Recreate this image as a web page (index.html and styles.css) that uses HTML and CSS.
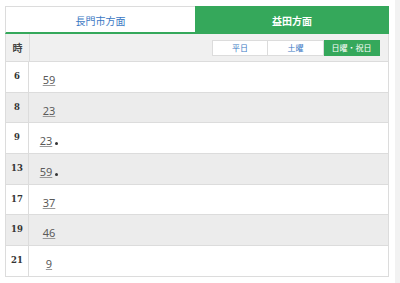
FILE: index.html
```html
<!DOCTYPE html>
<html lang="ja">
<head>
<meta charset="utf-8">
<link rel="stylesheet" href="styles.css">
</head>
<body>
<div class="page">
  <div class="timetable">
    <div class="tabs">
      <div class="tab">長門市方面</div>
      <div class="tab active">益田方面</div>
    </div>
    <div class="head">
      <div class="hour-h">時</div>
      <div class="days">
        <span class="day">平日</span>
        <span class="day">土曜</span>
        <span class="day on">日曜・祝日</span>
      </div>
    </div>
    <div class="row"><div class="hour">6</div><div class="mins"><span class="min"><u>59</u></span></div></div>
    <div class="row alt"><div class="hour">8</div><div class="mins"><span class="min"><u>23</u></span></div></div>
    <div class="row"><div class="hour">9</div><div class="mins"><span class="min"><u>23</u><i class="dot"></i></span></div></div>
    <div class="row alt"><div class="hour">13</div><div class="mins"><span class="min"><u>59</u><i class="dot"></i></span></div></div>
    <div class="row"><div class="hour">17</div><div class="mins"><span class="min"><u>37</u></span></div></div>
    <div class="row alt"><div class="hour">19</div><div class="mins"><span class="min"><u>46</u></span></div></div>
    <div class="row"><div class="hour">21</div><div class="mins"><span class="min"><u>9</u></span></div></div>
  </div>
</div>
<div class="scroll"></div>
</body>
</html>
```
FILE: styles.css
```css
html, body {
  margin: 0;
  padding: 0;
  height: 100%;
  background: #fff;
}
body {
  display: flex;
  font-family: "Noto Sans CJK JP", "Noto Sans", sans-serif;
  overflow: hidden;
}
.page {
  flex: 1;
  padding: 6px 0 0 5px;
}
.scroll {
  width: 5px;
  background: #f2f2f2;
}
.timetable {
  width: 384px;
}
.tabs {
  display: flex;
  height: 28px;
}
.tab {
  flex: 0 0 190px;
  box-sizing: border-box;
  border: 1px solid #dcdcdc;
  border-bottom: 2px solid #35a85b;
  border-right: none;
  color: #3b78c4;
  font-size: 10px;
  display: flex;
  align-items: center;
  justify-content: center;
  padding-top: 1px;
}
.tab.active {
  flex: 1;
  background: #35a85b;
  border: none;
  color: #fff;
  font-weight: bold;
}
.head {
  display: flex;
  align-items: center;
  height: 28px;
  background: #f0f0f0;
  border-left: 1px solid #dcdcdc;
  border-right: 1px solid #dcdcdc;
  border-bottom: 1px solid #dcdcdc;
  box-sizing: border-box;
}
.hour-h {
  width: 23px;
  align-self: stretch;
  display: flex;
  align-items: center;
  justify-content: center;
  border-right: 1px solid #dcdcdc;
  font-size: 10px;
  font-weight: bold;
  color: #444;
}
.days {
  margin-left: auto;
  margin-right: 8px;
  display: flex;
}
.day {
  width: 56px;
  height: 16px;
  box-sizing: border-box;
  border: 1px solid #dcdcdc;
  border-left: none;
  background: #fff;
  color: #3b78c4;
  font-size: 8px;
  display: flex;
  align-items: center;
  justify-content: center;
}
.day:first-child {
  border-left: 1px solid #dcdcdc;
}
.day.on {
  background: #35a85b;
  color: #fff;
  border-color: #35a85b;
}
.row {
  display: flex;
  align-items: flex-start;
  height: 30.7px;
  box-sizing: border-box;
  border-left: 1px solid #dcdcdc;
  border-right: 1px solid #dcdcdc;
  border-bottom: 1px solid #dcdcdc;
  background: #fff;
}
.row.alt {
  background: #ececec;
}
.hour {
  width: 23px;
  align-self: stretch;
  border-right: 1px solid #dcdcdc;
  box-sizing: border-box;
  padding-top: 9px;
  text-align: center;
  font-family: "DejaVu Serif", serif;
  font-size: 8.5px;
  line-height: 10px;
  font-weight: bold;
  color: #333;
}
.mins {
  display: flex;
  padding-top: 12px;
}
.min {
  display: block;
  width: 40px;
  text-align: center;
  font-family: "Noto Sans", sans-serif;
  font-size: 11px;
  line-height: 12px;
  color: #5a5a5a;
}
.min u {
  text-decoration-color: #999;
  text-underline-offset: 1px;
}
.dot {
  display: inline-block;
  width: 3px;
  height: 3px;
  border-radius: 50%;
  background: #333;
  margin-left: 3px;
  vertical-align: 0;
}
```
